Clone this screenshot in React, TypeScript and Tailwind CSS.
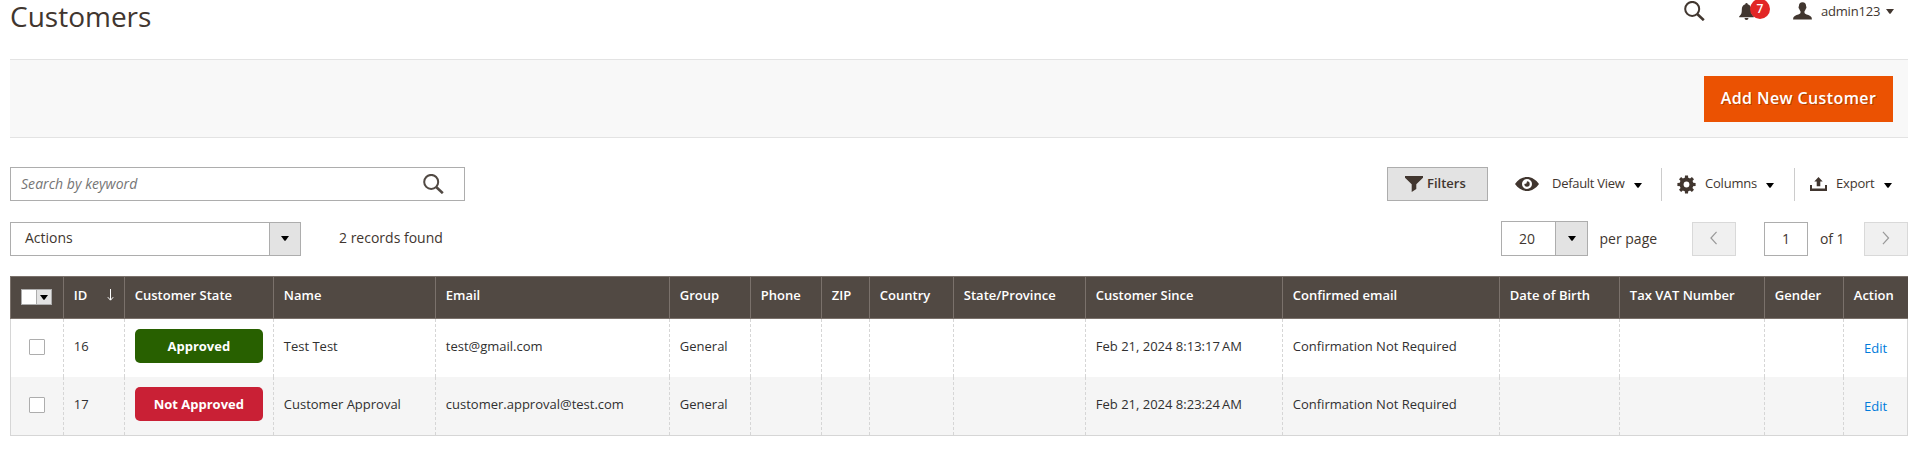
import React from "react";

type IconProps = { className?: string };

const Search = ({ className = "" }: IconProps) => (
  <svg viewBox="0 0 21 20" className={`h-5 w-[21px] shrink-0 ${className}`} fill="none" stroke="currentColor">
    <circle cx="8.2" cy="7.9" r="7" strokeWidth="2" />
    <path d="M13.2 13l6.6 6.2" strokeWidth="2.6" />
  </svg>
);

const Caret = ({ className = "" }: IconProps) => (
  <svg viewBox="0 0 8 5" className={`h-[5px] w-2 shrink-0 ${className}`} fill="currentColor">
    <path d="M0 0h8L4.5 4.7h-1z" />
  </svg>
);

const Bell = () => (
  <svg viewBox="0 0 15 17" className="h-[17px] w-[15px] shrink-0" fill="currentColor">
    <path d="M6.3 1.2a1.2 1.2 0 0 1 2.4 0C11.2 2 12.2 4 12.2 6.5c0 4 .6 5.3 2.6 6.7v1H.2v-1c2-1.4 2.600-2.700 2.600-6.700C2.800 4 3.800 2 6.300 1.200zM5.500 15h4a2 2 0 0 1-4 0z" />
  </svg>
);

const User = () => (
  <svg viewBox="0 0 19 18" className="h-[18px] w-[19px] shrink-0" fill="currentColor">
    <path d="M9.500.2c2.300 0 3.600 1.500 3.600 3.800 0 .5.500.8.300 1.700-.1.700-.6.800-.7 1.300-.3 1.200-.7 1.700-1.200 2.300v1.800c.3 1.100 3.500 1.600 5.700 2.900 1.300.8 1.600 1.700 1.700 3.500H.1c.1-1.800.4-2.700 1.700-3.500 2.200-1.300 5.400-1.800 5.700-2.900V9.300C7 8.700 6.600 8.200 6.300 7c-.1-.5-.6-.6-.7-1.300-.2-.9.300-1.200.3-1.700C5.900 1.700 7.200.2 9.500.2z" />
  </svg>
);

const Funnel = () => (
  <svg viewBox="0 0 18 16" className="h-4 w-[18px] shrink-0" fill="currentColor">
    <path d="M0 0h18v1.800l-6.700 6.500V13L6.700 16V8.300L0 1.800z" />
  </svg>
);

const Eye = () => (
  <svg viewBox="0 0 24 14" className="h-3.5 w-6 shrink-0" fill="currentColor" fillRule="evenodd">
    <path d="M0 7C3 2.700 7.200 0 12 0s9 2.700 12 7c-3 4.300-7.200 7-12 7S3 11.300 0 7zm12-5a5 5 0 1 0 0 10 5 5 0 0 0 0-10zm0 2.300l-.6 2.100-2.100.600A2.700 2.700 0 1 0 12 4.300z" />
  </svg>
);

const Gear = () => (
  <svg viewBox="-9.500 -9.500 19 19" className="h-[19px] w-[19px] shrink-0">
    <g fill="currentColor">
      <circle r="6.900" />
      {[0, 45, 90, 135].map((a) => (
        <path key={a} d="M-1.500-9.100h3L2.200 0l-.7 9.100h-3L-2.200 0z" transform={`rotate(${a})`} />
      ))}
    </g>
    <circle r="2.900" fill="#fff" />
  </svg>
);

const ExportIcon = () => (
  <svg viewBox="0 0 17 14" className="h-3.5 w-[17px] shrink-0" fill="currentColor">
    <path d="M0 8h2v3.500h13V8h2v6H0zM8.500 0l4.200 4.500H10.300v4.800H6.700V4.500H4.300z" />
  </svg>
);

const columns = [
  "ID", "Customer State", "Name", "Email", "Group", "Phone", "ZIP", "Country", "State/Province",
  "Customer Since", "Confirmed email", "Date of Birth", "Tax VAT Number", "Gender", "Action",
];

const rows = [
  { id: "16", approved: true, name: "Test Test", email: "test@gmail.com", since: "Feb 21, 2024 8:13:17\u2009AM" },
  { id: "17", approved: false, name: "Customer Approval", email: "customer.approval@test.com", since: "Feb 21, 2024 8:23:24\u2009AM" },
];

const grid =
  "grid grid-cols-[53px_61px_149px_162px_234px_81px_71px_48px_84px_132px_197px_217px_120px_145px_79px_65px]";

function Row({ row }: { row: (typeof rows)[number] }) {
  const cells = [
    row.id, null, row.name, row.email, "General", "", "", "", "", row.since,
    "Confirmation Not Required", "", "", "",
  ];
  return (
    <div className={`${grid} h-[58px] text-[13px] text-[#303030] odd:bg-white even:bg-[#f5f5f5]`}>
      <div className="border-l border-[#d6d6d6] pl-[18px] pt-5">
        <div className="h-4 w-4 rounded-[1px] border border-[#adadad] bg-white" />
      </div>
      {cells.map((c, i) => (
        <div key={i} className="border-l border-dashed border-[#d6d6d6] pl-[9.8px] pt-[18px] leading-[18px] whitespace-nowrap">
          {i === 1 ? (
            <div
              className={`-mt-2 h-[34px] w-32 rounded-[5px] text-center font-bold leading-[34px] text-white ${
                row.approved ? "bg-[#286000]" : "bg-[#c92035]"
              }`}
            >
              {row.approved ? "Approved" : "Not Approved"}
            </div>
          ) : (
            c
          )}
        </div>
      ))}
      <div className="border-x border-dashed border-[#d6d6d6] pl-5 pt-5 leading-[18px] text-[#007bdb] [border-right-style:solid]">
        Edit
      </div>
    </div>
  );
}

export default function App() {
  return (
    <div className="h-[474px] w-[1932px] overflow-hidden bg-white pl-[10px] pr-6 font-['Open_Sans','Noto_Sans',sans-serif] text-[14px] text-[#41362f]">
      <header className="flex h-[59px] items-start">
        <h1 className="h-8 text-[28px] leading-8">Customers</h1>
        <div className="ml-auto flex h-[22px] items-center pr-[14px]">
          <Search />
          <div className="relative ml-[34px] flex pt-px">
            <Bell />
            <span className="absolute -top-[3px] left-[11px] h-5 w-5 rounded-full bg-[#e22626] text-center text-[12px] font-semibold leading-5 text-white">
              7
            </span>
          </div>
          <div className="ml-[39px] flex">
            <User />
          </div>
          <span className="ml-[9px] w-[58px] pt-px text-[13px] tracking-[-0.2px] whitespace-nowrap">admin123</span>
          <Caret className="ml-[7px] mt-px" />
        </div>
      </header>

      <section className="flex h-[79px] items-center justify-end border-y border-[#e3e3e3] bg-[#f8f8f8] pr-[15px]">
        <button className="h-[46px] w-[189px] bg-[#eb5202] pb-0.5 text-[16px] font-semibold tracking-[0.4px] text-white [text-shadow:1px_1px_0_rgba(0,0,0,.25)]">
          Add New Customer
        </button>
      </section>

      <section className="mt-[29px] flex h-[34px] items-center">
        <div className="flex h-[34px] w-[455px] items-center justify-between border border-[#adadad] pl-[10px] pr-5 text-[#757575] italic">
          <span className="pb-0.5 tracking-[0.05px]">Search by keyword</span>
          <Search className="text-[#514943]" />
        </div>
        <div className="ml-auto flex h-[34px] items-center text-[13px]">
          <button className="flex h-[34px] w-[101px] items-center border border-[#adadad] bg-[#e3e3e3] pl-[17px] font-semibold">
            <Funnel />
            <span className="ml-1">Filters</span>
          </button>
          <div className="flex w-[173px] items-center pl-[27px]">
            <Eye />
            <span className="ml-[13px] w-[73px] tracking-[-0.3px] whitespace-nowrap">Default View</span>
            <Caret className="ml-[9px] mt-0.5 text-black" />
          </div>
          <div className="flex h-[33px] w-[133px] items-center border-l border-[#ccc] pl-[15px]">
            <Gear />
            <span className="ml-[9px] w-[52px] tracking-[-0.2px]">Columns</span>
            <Caret className="ml-[9px] mt-0.5 text-black" />
          </div>
          <div className="flex h-[33px] w-[114px] items-center border-l border-[#ccc] pl-[15px]">
            <ExportIcon />
            <span className="ml-[9px] w-[39px] tracking-[-0.2px]">Export</span>
            <Caret className="ml-[9px] mt-0.5 text-black" />
          </div>
        </div>
      </section>

      <section className="mt-5 flex h-[35px] items-center">
        <div className="flex h-[34px] w-[291px] border border-[#adadad]">
          <span className="grow pl-[14px] leading-[30px]">Actions</span>
          <span className="flex w-[31px] items-center justify-center border-l border-[#adadad] bg-[#e3e3e3]">
            <Caret className="text-black" />
          </span>
        </div>
        <span className="ml-[38px] pb-0.5">2 records found</span>
        <div className="ml-auto flex items-center">
          <div className="flex h-[35px] w-[87px] border border-[#adadad]">
            <span className="grow pl-[17px] leading-[33px]">20</span>
            <span className="flex w-8 items-center justify-center border-l border-[#adadad] bg-[#e3e3e3]">
              <Caret className="text-black" />
            </span>
          </div>
          <span className="ml-[11.5px] w-[92.5px]">per page</span>
          <PageButton d="M7 1L1 7.500 7 14" />
          <div className="ml-7 h-[34px] w-11 border border-[#adadad] text-center leading-8">1</div>
          <span className="ml-3 w-11 tracking-[-0.1px]">of 1</span>
          <PageButton d="M1 1l6 6.500L1 14" />
        </div>
      </section>

      <main className="mt-5 w-[1898px] border-b border-[#d6d6d6]">
        <div className={`${grid} h-[43px] border border-r-0 border-l-0 border-[#7a716b] bg-[#514943] text-[13px] font-semibold text-white`}>
          <div className="flex items-start border-l border-[#7a716b] pl-[10px] pt-3">
            <div className="flex h-4 w-[31px] border border-[#adadad] bg-white">
              <span className="ml-auto flex w-[15px] items-center justify-center border-l border-[#adadad] bg-[#e3e3e3] text-black">
                <Caret />
              </span>
            </div>
          </div>
          {columns.map((c) => (
            <div key={c} className="flex border-l border-[#7a716b] pl-[9.8px] pt-[9px] leading-[18px] whitespace-nowrap">
              {c}
              {c === "ID" && (
                <svg viewBox="0 0 7 12" className="ml-auto mr-[10px] mt-[3px] h-3 w-[7px]" fill="none" stroke="currentColor">
                  <path d="M3.500 0v11M.8 8.200l2.700 3 2.700-3" />
                </svg>
              )}
            </div>
          ))}
        </div>
        <div>
          {rows.map((r) => (
            <Row key={r.id} row={r} />
          ))}
        </div>
      </main>
    </div>
  );
}

function PageButton({ d }: { d: string }) {
  return (
    <button className="flex h-[34px] w-11 items-center justify-center border border-[#d9d9d9] bg-[#f0f0f0] text-[#999]">
      <svg viewBox="0 0 8 15" className="-mt-0.5 h-[14px] w-[7.500px]" fill="none" stroke="currentColor" strokeWidth="1.300">
        <path d={d} />
      </svg>
    </button>
  );
}
